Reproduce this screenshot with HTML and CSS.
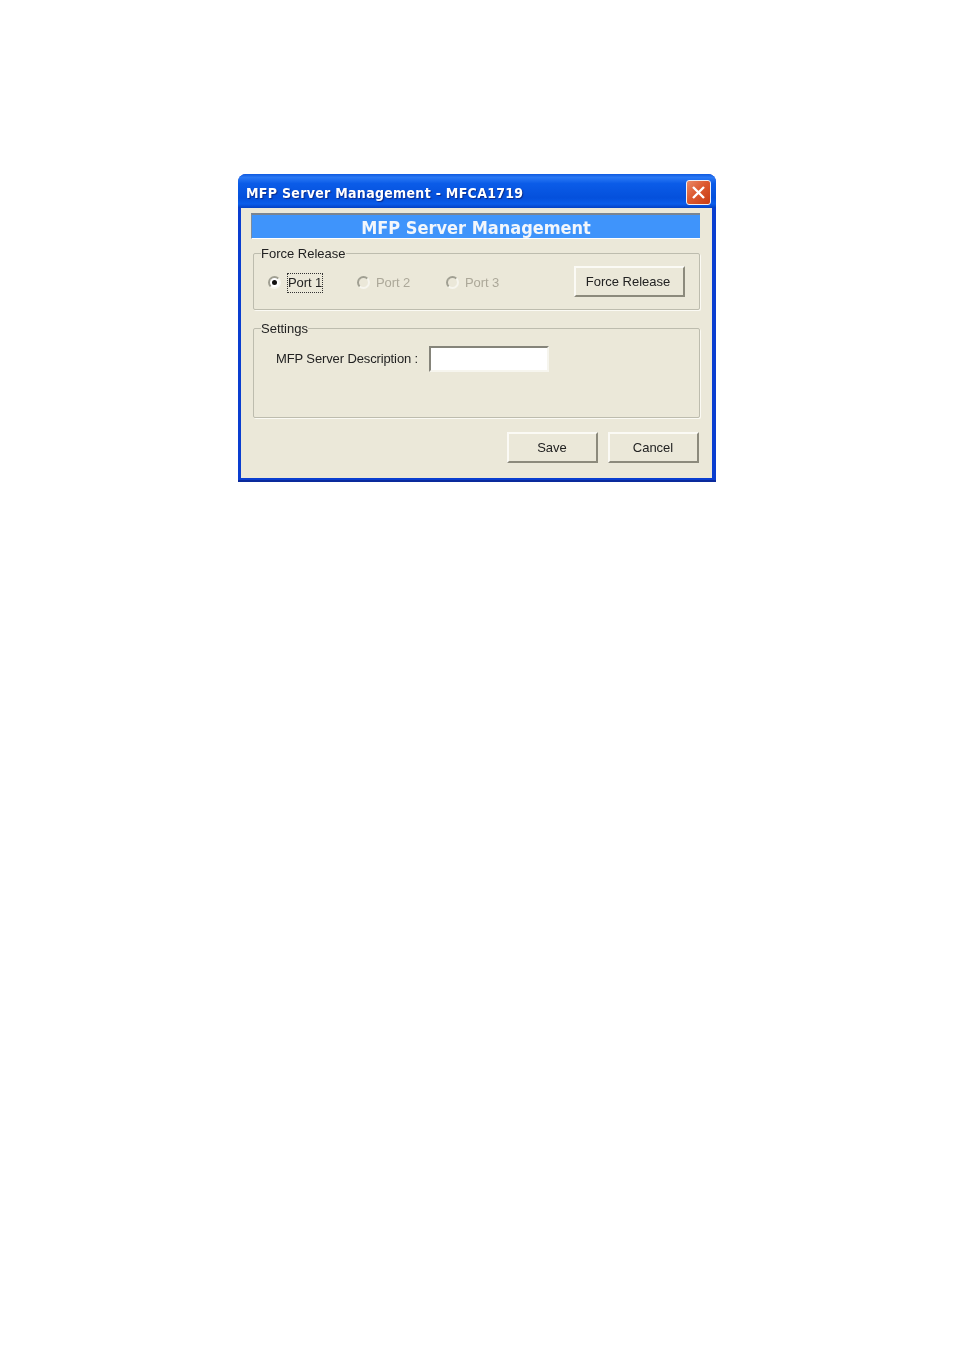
FILE: index.html
```html
<!DOCTYPE html>
<html lang="en">
<head>
    <meta charset="UTF-8">
    <meta name="viewport" content="width=device-width, initial-scale=1.0">
    <title>MFP Server Management</title>
    <link rel="stylesheet" href="styles.css">
</head>
<body>
    <div class="window">
        <div class="title-bar">
            <span class="title-text">MFP Server Management - MFCA1719</span>
            <div class="close-btn">
                <svg width="15" height="15" viewBox="0 0 15 15">
                    <path d="M2 2 L13 13 M13 2 L2 13" stroke="#fff" stroke-width="2.4" fill="none"/>
                </svg>
            </div>
        </div>
        <div class="content">
            <div class="banner">MFP Server Management</div>

            <div class="group group-release">
                <span class="group-label">Force Release</span>
                <div class="port-row">
                    <div class="ports">
                        <div class="port port-first">
                            <span class="radio radio-on"></span>
                            <span class="port-label focused">Port 1</span>
                        </div>
                        <div class="port">
                            <span class="radio"></span>
                            <span class="port-label disabled">Port 2</span>
                        </div>
                        <div class="port">
                            <span class="radio"></span>
                            <span class="port-label disabled">Port 3</span>
                        </div>
                    </div>
                    <div class="btn btn-release"><span class="btn-text btn-text-release">Force Release</span></div>
                </div>
            </div>

            <div class="group group-settings">
                <span class="group-label">Settings</span>
                <div class="field-row">
                    <span class="field-label">MFP Server Description :</span>
                    <div class="text-input"></div>
                </div>
            </div>

            <div class="actions">
                <div class="btn btn-action"><span class="btn-text">Save</span></div>
                <div class="btn btn-action"><span class="btn-text">Cancel</span></div>
            </div>
        </div>
    </div>
</body>
</html>
```

FILE: styles.css
```css
body {
    margin: 0;
    padding: 174px 0 0 238px;
    background-color: #fff;
    font-family: "Liberation Sans", Arial, sans-serif;
    font-size: 13px;
    color: #222;
}

/* Window frame */
.window {
    width: 478px;
    height: 308px;
    box-sizing: border-box;
    display: flex;
    flex-direction: column;
    background-color: #0a3ed0;
    border-radius: 8px 8px 0 0;
    padding: 0 4px 2px 3px;
    border-bottom: 2px solid #0a2a9c;
    filter: blur(0.3px);
}
.title-bar {
    height: 34px;
    margin: 0 -4px 0 -3px;
    padding: 4px 5px 0 8px;
    box-sizing: border-box;
    display: flex;
    align-items: center;
    justify-content: space-between;
    border-radius: 8px 8px 0 0;
    background: linear-gradient(to bottom, #0f5ae0 0%, #2a78f4 10%, #0b5ce8 28%, #0450dc 70%, #0a5cea 88%, #0340c4 100%);
}
.title-text {
    font-family: "DejaVu Sans Condensed", "DejaVu Sans", sans-serif;
    font-stretch: condensed;
    font-size: 14px;
    font-weight: bold;
    letter-spacing: 0.3px;
    color: #fff;
    text-shadow: 1px 1px 1px #0a2a8a;
}
.close-btn {
    width: 25px;
    height: 25px;
    margin-top: -2px;
    box-sizing: border-box;
    display: flex;
    align-items: center;
    justify-content: center;
    border: 1px solid #eef0f4;
    border-radius: 3px;
    background: linear-gradient(135deg, #ea8a68 0%, #dc5a30 45%, #c83c14 100%);
}

.content {
    flex: 1;
    padding: 5px 12px 0 10px;
    background-color: #ebe8d9;
}
.banner {
    height: 26px;
    line-height: 26px;
    box-sizing: border-box;
    text-align: center;
    background-color: #3f94fb;
    border-top: 2px solid #7a8490;
    border-left: 1px solid #7a8ca0;
    border-bottom: 1px solid #fff;
    font-family: "DejaVu Sans Condensed", "DejaVu Sans", sans-serif;
    font-stretch: condensed;
    font-size: 18px;
    font-weight: bold;
    color: #f2f6fb;
}

/* Group boxes */
.group {
    position: relative;
    margin-left: 2px;
    box-sizing: border-box;
    border: 1px solid #bdbcae;
    box-shadow: 1px 1px 0 #fbfaf4;
    border-radius: 2px;
}
.group-release {
    height: 57px;
    margin-top: 14px;
}
.group-settings {
    height: 90px;
    margin-top: 18px;
}
.group-label {
    position: absolute;
    top: -8px;
    left: 7px;
    line-height: 16px;
    background-color: #ebe8d9;
    white-space: nowrap;
}

.port-row {
    display: flex;
    justify-content: space-between;
    align-items: flex-start;
    padding: 12px 14px 0 14px;
}
.ports {
    display: flex;
    margin-top: 5px;
}
.port {
    width: 89px;
    display: flex;
    align-items: center;
    gap: 5px;
}
.port-label {
    line-height: 18px;
    margin-top: 2px;
    border: 1px dotted transparent;
    letter-spacing: -0.1px;
}
.port-label.focused {
    margin-left: 1px;
    border-color: #333;
}
.port-label.disabled {
    color: #aca899;
}
.radio {
    width: 13px;
    height: 13px;
    box-sizing: border-box;
    border: 2px solid #a09f92;
    border-right-color: #f6f5ee;
    border-bottom-color: #f6f5ee;
    border-radius: 50%;
    background-color: #ebe8d9;
    display: flex;
    align-items: center;
    justify-content: center;
}
.radio-on {
    background-color: #fff;
}
.radio-on::after {
    content: "";
    width: 5px;
    height: 5px;
    border-radius: 50%;
    background-color: #111;
}

/* Buttons */
.btn {
    box-sizing: border-box;
    display: flex;
    align-items: center;
    justify-content: center;
    background-color: #ebe8d9;
    border-top: 2px solid #fbfaf5;
    border-left: 2px solid #fbfaf5;
    border-right: 2px solid #8c8a7c;
    border-bottom: 2px solid #8c8a7c;
}
.btn-text {
    margin: -1px 1px 0 0;
}
.btn-text-release {
    margin-right: 3px;
}
.btn-release {
    width: 111px;
    height: 31px;
}
.btn-action {
    width: 91px;
    height: 31px;
}
.actions {
    display: flex;
    justify-content: flex-end;
    gap: 10px;
    margin-top: 14px;
    margin-right: 1px;
}

/* Settings row */
.field-row {
    display: flex;
    align-items: flex-start;
    padding: 17px 0 0 22px;
}
.field-label {
    width: 153px;
    letter-spacing: -0.12px;
    margin-top: 5px;
}
.text-input {
    width: 120px;
    height: 26px;
    box-sizing: border-box;
    background-color: #fff;
    border-top: 2px solid #85847a;
    border-left: 2px solid #85847a;
    border-right: 2px solid #f6f5ee;
    border-bottom: 2px solid #f6f5ee;
}
```
